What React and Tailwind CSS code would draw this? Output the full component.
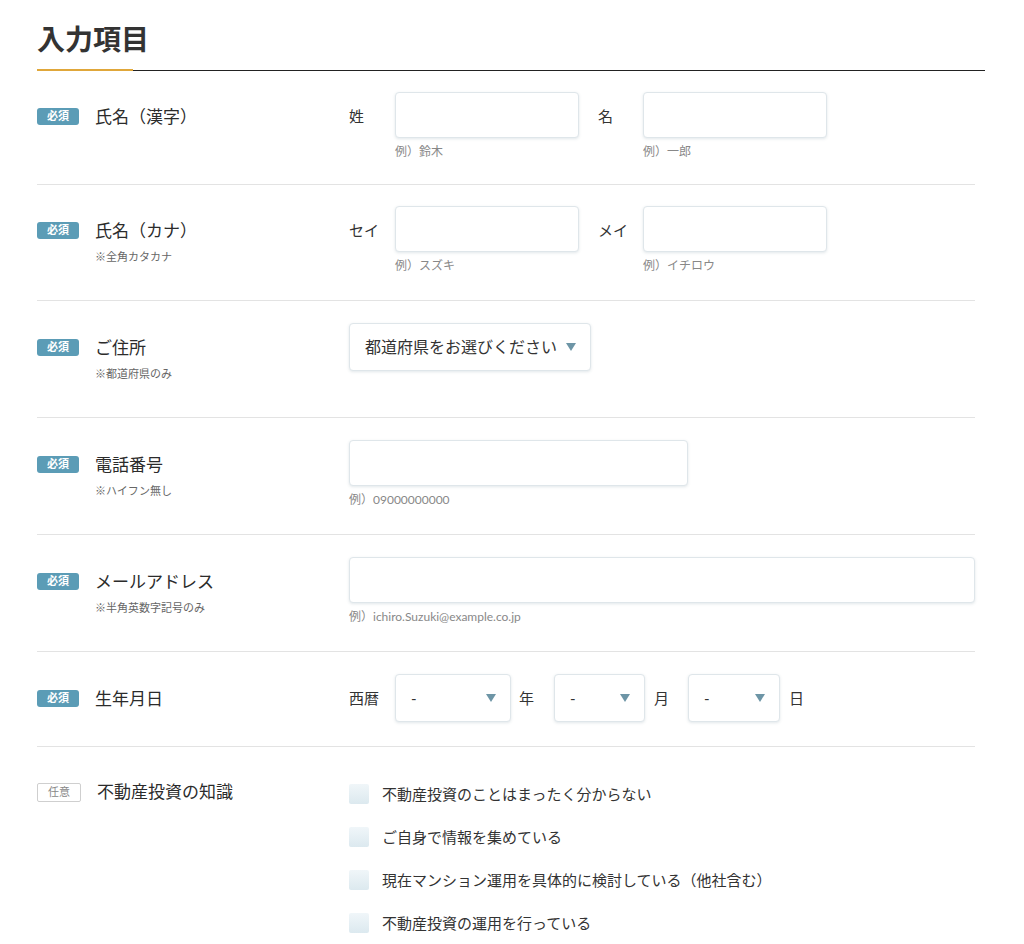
import React from 'react';

const font = { fontFamily: "Lato, 'Noto Sans CJK JP', sans-serif" };

const Required = () => (
  <span className="flex h-[17px] w-[42px] shrink-0 items-center justify-center rounded-[3px] bg-[#5b9cb6] text-[11px] font-bold text-white">
    必須
  </span>
);

const Optional = () => (
  <span className="flex h-[19px] w-[44px] shrink-0 items-center justify-center rounded-[2px] border border-[#cfcfcf] bg-white text-[11px] text-[#888]">
    任意
  </span>
);

const Arrow = () => (
  <svg width="10" height="8" viewBox="0 0 10 8" className="shrink-0">
    <path d="M0 0 H10 L5 8 Z" fill="#6d95a6" />
  </svg>
);

const inputCls =
  'h-[46px] rounded-[4px] border border-[#dfe6ea] bg-white shadow-[0_1px_3px_rgba(90,120,140,0.18)]';

const LeftCol = ({ label, note }) => (
  <div className="flex w-[312px] shrink-0 items-start pt-[13px]">
    <div className="mt-[3px]">
      <Required />
    </div>
    <div className="ml-[16px]">
      <div className="text-[17px] leading-[24px] text-[#2b2b2b]">{label}</div>
      {note && <div className="mt-[6px] text-[11px] leading-[16px] text-[#666]">{note}</div>}
    </div>
  </div>
);

const Field = ({ w, hint }) => (
  <div className="flex flex-col">
    <div className={`${inputCls} ${w}`} />
    {hint && <div className="mt-[6px] text-[12px] leading-[16px] text-[#888]">{hint}</div>}
  </div>
);

const Select = ({ w, text, big }) => (
  <div
    className={`flex h-[48px] items-center justify-between rounded-[4px] border border-[#dfe6ea] bg-white pl-[15px] pr-[14px] shadow-[0_1px_3px_rgba(90,120,140,0.18)] ${w}`}
  >
    <span className={big ? 'text-[16px] text-[#333]' : 'text-[15px] text-[#333]'}>{text}</span>
    <Arrow />
  </div>
);

const checks = [
  '不動産投資のことはまったく分からない',
  'ご自身で情報を集めている',
  '現在マンション運用を具体的に検討している（他社含む）',
  '不動産投資の運用を行っている',
];

export default function App() {
  return (
    <div className="min-h-screen bg-white pl-[37px] pr-[39px] pt-[21px]" style={font}>
      <h1 className="text-[28px] font-bold leading-[36px] text-[#333]">入力項目</h1>
      <div className="mt-[12px] flex items-end">
        <div className="h-[2px] w-[96px] bg-[#e0a73a]" />
        <div className="h-[1px] flex-1 bg-[#222]" />
      </div>

      <div className="w-[938px]">
        {/* 氏名（漢字） */}
        <div className="flex h-[114px] border-b border-[#e3e3e3] pt-[21px]">
          <LeftCol label="氏名（漢字）" />
          <div className="flex items-start">
            <span className="mt-[13px] w-[46px] text-[15px] text-[#333]">姓</span>
            <Field w="w-[184px]" hint="例）鈴木" />
            <span className="ml-[19px] mt-[13px] w-[45px] text-[15px] text-[#333]">名</span>
            <Field w="w-[184px]" hint="例）一郎" />
          </div>
        </div>

        {/* 氏名（カナ） */}
        <div className="flex h-[116px] border-b border-[#e3e3e3] pt-[21px]">
          <LeftCol label="氏名（カナ）" note="※全角カタカナ" />
          <div className="flex items-start">
            <span className="mt-[13px] w-[46px] text-[15px] text-[#333]">セイ</span>
            <Field w="w-[184px]" hint="例）スズキ" />
            <span className="ml-[19px] mt-[13px] w-[45px] text-[15px] text-[#333]">メイ</span>
            <Field w="w-[184px]" hint="例）イチロウ" />
          </div>
        </div>

        {/* ご住所 */}
        <div className="flex h-[117px] border-b border-[#e3e3e3] pt-[22px]">
          <LeftCol label="ご住所" note="※都道府県のみ" />
          <Select w="w-[242px]" text="都道府県をお選びください" big />
        </div>

        {/* 電話番号 */}
        <div className="flex h-[117px] border-b border-[#e3e3e3] pt-[22px]">
          <LeftCol label="電話番号" note="※ハイフン無し" />
          <Field w="w-[339px]" hint="例）09000000000" />
        </div>

        {/* メールアドレス */}
        <div className="flex h-[117px] border-b border-[#e3e3e3] pt-[22px]">
          <LeftCol label="メールアドレス" note="※半角英数字記号のみ" />
          <Field w="w-[626px]" hint="例）ichiro.Suzuki@example.co.jp" />
        </div>

        {/* 生年月日 */}
        <div className="flex h-[95px] border-b border-[#e3e3e3] pt-[22px]">
          <LeftCol label="生年月日" />
          <div className="flex h-[48px] items-center text-[15px] text-[#333]">
            <span className="w-[46px]">西暦</span>
            <Select w="w-[116px]" text="-" />
            <span className="ml-[8px] w-[35px]">年</span>
            <Select w="w-[91px]" text="-" />
            <span className="ml-[9px] w-[34px]">月</span>
            <Select w="w-[92px]" text="-" />
            <span className="ml-[9px]">日</span>
          </div>
        </div>

        {/* 不動産投資の知識 */}
        <div className="flex pt-[27px]">
          <div className="flex w-[312px] shrink-0 items-start pt-[6px]">
            <div className="mt-[3px]">
              <Optional />
            </div>
            <div className="ml-[16px] text-[17px] leading-[24px] text-[#2b2b2b]">不動産投資の知識</div>
          </div>
          <div className="flex flex-col gap-[23px] pt-[10px]">
            {checks.map((c) => (
              <label key={c} className="flex items-center">
                <span className="h-[20px] w-[20px] rounded-[2px] bg-gradient-to-b from-[#f0f6f9] to-[#dce9ef]" />
                <span className="ml-[13px] text-[15px] leading-[20px] text-[#333]">{c}</span>
              </label>
            ))}
          </div>
        </div>
      </div>
    </div>
  );
}
